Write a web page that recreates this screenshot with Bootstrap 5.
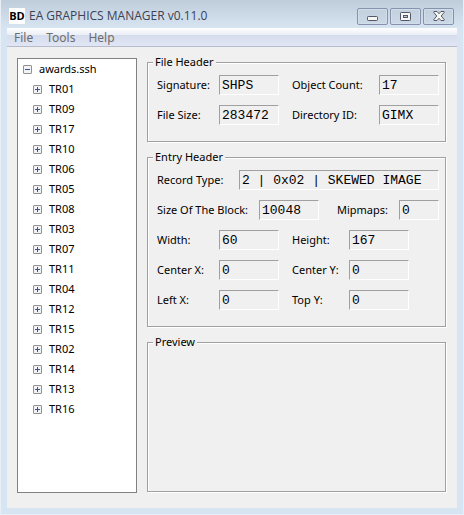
<!DOCTYPE html>
<html lang="en">
<head>
<meta charset="utf-8">
<meta name="viewport" content="width=device-width, initial-scale=1">
<title>EA GRAPHICS MANAGER v0.11.0</title>
<link href="https://cdn.jsdelivr.net/npm/bootstrap@5.3.0/dist/css/bootstrap.min.css" rel="stylesheet">
<style>
  body { font: 11px/16px "Noto Sans", "Open Sans", sans-serif; color: #000; background: #d7e4f2; }
  .app-window { padding: 0 6px 6px; background: linear-gradient(#bfcddb, #d7e4f2 28px); border: solid #e9eff7; border-width: 0 1px 1px; }
  .title-bar { height: 28px; padding: 4px 3px 0 2px; color: #3c4254; }
  .app-logo { width: 16px; height: 16px; background: #fff; color: #000; font: bold 11px/16px "Open Sans", sans-serif; text-align: center; }
  .app-title { margin-left: 4px; font: 12px/16px "Open Sans", sans-serif; }
  .win-btns { gap: 2px; }
  .win-btn { width: 31px; height: 17px; padding: 0; border: 1px solid #8793ae; border-radius: 2px; background: linear-gradient(#c3d0de, #cbd8e6); box-shadow: inset 0 0 0 1px #d2deea; display: flex; align-items: center; justify-content: center; }
  .menu-strip { height: 19px; padding: 0 7px; gap: 13px; border-bottom: 1px solid #b6bccc; background: linear-gradient(#fff 0, #e9edf5 7px, #d5dcec 7px, #e0e6f4 18px); }
  .menu-strip a { color: #6d6d6d; text-decoration: none; font-size: 12px; line-height: 20px; }
  .client { padding: 7px 11px 15px 10px; background: #f0f0f0; gap: 10px; }
  .tree-box { width: 120px; margin-top: 4px; padding: 0 5px; background: #fff; border: 1px solid #828282; }
  .tree-box ul ul { padding-left: 10px; }
  .tree-row { display: flex; align-items: center; height: 20px; gap: 7px; }
  .tree-toggle { width: 9px; height: 9px; padding: 0; border: 0; background: none; display: flex; }
  .panels { gap: 7px; margin-bottom: 1px; }
  .group { border: 1px solid #a0a0a0; padding: 5px 6px 16px 5px; box-shadow: inset 1px 1px #fff, 1px 1px #fff; }
  .group legend { float: none; width: auto; margin: 0; padding: 0 2px; font-size: 11px; line-height: 16px; background: #f0f0f0; }
  .rows { display: flex; flex-direction: column; gap: 10px; padding-left: 4px; }
  .field-row { display: flex; align-items: center; }
  .w-a { width: 62px; } .w-b { width: 87px; } .w-c { width: 57px; } .w-d { width: 82px; } .w-e { width: 102px; }
  .group label { flex: none; white-space: nowrap; }
  .group input { width: 60px; min-width: 0; height: 20px; padding: 0 0 0 2px; border: 1px solid; border-color: #a0a0a0 #fff #fff #a0a0a0; border-radius: 0; background: #f0f0f0; color: #000; font: 13px/18px "Liberation Mono", monospace; outline: 0; }
  .group input.narrow { width: 40px; }
  .second { margin-left: 13px; }
</style>
<script src="https://cdn.jsdelivr.net/npm/bootstrap@5.3.0/dist/js/bootstrap.bundle.min.js"></script>
</head>
<body>
<svg class="d-none" aria-hidden="true">
  <symbol id="plus" viewBox="0 0 9 9"><rect x=".5" y=".5" width="8" height="8" rx=".5" fill="#f3f3f3" stroke="#919191"/><path d="M2 4.5h5M4.5 2v5" stroke="#34549c"/></symbol>
  <symbol id="minus" viewBox="0 0 9 9"><rect x=".5" y=".5" width="8" height="8" rx=".5" fill="#f3f3f3" stroke="#919191"/><path d="M2 4.5h5" stroke="#34549c"/></symbol>
</svg>
<div class="app-window min-vh-100 d-flex flex-column">
  <header class="title-bar d-flex align-items-center">
    <span class="app-logo">BD</span>
    <span class="app-title">EA GRAPHICS MANAGER v0.11.0</span>
    <div class="win-btns d-flex ms-auto">
      <button class="win-btn" type="button" aria-label="Minimize"><svg class="mt-1" width="11" height="5" viewBox="0 0 11 5"><rect x=".5" y=".5" width="10" height="4" rx=".8" fill="#f6f6f2" stroke="#535666"/></svg></button>
      <button class="win-btn" type="button" aria-label="Maximize"><svg width="11" height="9" viewBox="0 0 11 9"><rect x=".5" y=".5" width="10" height="8" rx=".8" fill="#f6f6f2" stroke="#535666"/><rect x="3.5" y="3.5" width="4" height="2" fill="#b9c9da" stroke="#535666"/></svg></button>
      <button class="win-btn" type="button" aria-label="Close"><svg width="12" height="10" viewBox="0 0 12 10"><path d="M1 .5h3L6 2.7 8 .5h3l.3.8L8.2 5l3.1 3.7-.3.8H8L6 7.3 4 9.5H1l-.3-.8L3.8 5 .7 1.3z" fill="#f6f6f2" stroke="#535666"/></svg></button>
    </div>
  </header>
  <nav class="menu-strip d-flex" aria-label="Main">
    <a href="#">File</a><a href="#">Tools</a><a href="#">Help</a>
  </nav>
  <main class="client d-flex flex-grow-1">
    <nav class="tree-box flex-shrink-0" aria-label="Objects">
      <ul class="list-unstyled mb-0">
        <li>
          <div class="tree-row"><button class="tree-toggle" type="button" aria-label="Collapse awards.ssh"><svg width="9" height="9"><use href="#minus"/></svg></button><span>awards.ssh</span></div>
          <ul class="list-unstyled" id="objects"></ul>
        </li>
      </ul>
    </nav>
    <div class="panels d-flex flex-column flex-grow-1">
      <fieldset class="group">
        <legend>File Header</legend>
        <div class="rows">
          <div class="field-row"><label class="w-a" for="sig">Signature:</label><input id="sig" value="SHPS" readonly><label class="w-b second" for="count">Object Count:</label><input id="count" value="17" readonly></div>
          <div class="field-row"><label class="w-a" for="fsize">File Size:</label><input id="fsize" value="283472" readonly><label class="w-b second" for="dir">Directory ID:</label><input id="dir" value="GIMX" readonly></div>
        </div>
      </fieldset>
      <fieldset class="group">
        <legend>Entry Header</legend>
        <div class="rows">
          <div class="field-row"><label class="w-d" for="rec">Record Type:</label><input id="rec" class="flex-grow-1" value="2 | 0x02 | SKEWED IMAGE" readonly></div>
          <div class="field-row"><label class="w-e" for="block">Size Of The Block:</label><input id="block" value="10048" readonly><label class="w-a ms-auto" for="mip">Mipmaps:</label><input id="mip" class="narrow" value="0" readonly></div>
          <div class="field-row"><label class="w-a" for="wid">Width:</label><input id="wid" value="60" readonly><label class="w-c second" for="hei">Height:</label><input id="hei" value="167" readonly></div>
          <div class="field-row"><label class="w-a" for="cx">Center X:</label><input id="cx" value="0" readonly><label class="w-c second" for="cy">Center Y:</label><input id="cy" value="0" readonly></div>
          <div class="field-row"><label class="w-a" for="lx">Left X:</label><input id="lx" value="0" readonly><label class="w-c second" for="ty">Top Y:</label><input id="ty" value="0" readonly></div>
        </div>
      </fieldset>
      <fieldset class="group flex-grow-1">
        <legend>Preview</legend>
      </fieldset>
    </div>
  </main>
</div>
<script>
  const names = ['01','09','17','10','06','05','08','03','07','11','04','12','15','02','14','13','16'];
  document.getElementById('objects').innerHTML = names.map(n =>
    `<li class="tree-row"><button class="tree-toggle" type="button" aria-label="Expand TR${n}"><svg width="9" height="9"><use href="#plus"/></svg></button><span>TR${n}</span></li>`).join('');
</script>
</body>
</html>
